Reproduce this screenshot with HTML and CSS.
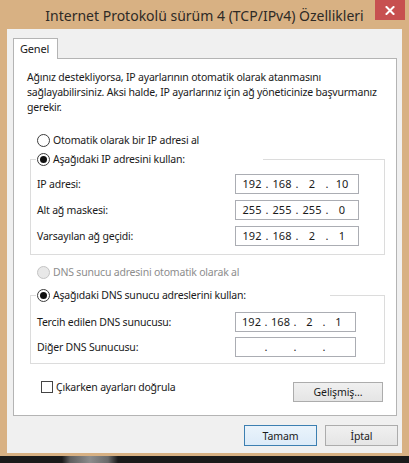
FILE: index.html
```html
<!DOCTYPE html>
<html lang="tr">
<head>
<meta charset="utf-8">
<title>Internet Protokolü sürüm 4 (TCP/IPv4) Özellikleri</title>
<link rel="stylesheet" href="styles.css">
</head>
<body>
<div class="window">
  <div class="titlebar">
    <div class="tb-left"></div>
    <div class="title">Internet Protokolü sürüm 4 (TCP/IPv4) Özellikleri</div>
    <div class="tb-right">
      <div class="close">
        <svg width="10" height="9" viewBox="0 0 10 9"><path d="M1.5 1 L8.5 8 M8.5 1 L1.5 8" stroke="#fff" stroke-width="2" stroke-linecap="square"/></svg>
      </div>
    </div>
  </div>
  <div class="client">
    <div class="tabs"><div class="tab">Genel</div></div>
    <div class="panel">
      <p class="intro">Ağınız destekliyorsa, IP ayarlarının otomatik olarak atanmasını<br>sağlayabilirsiniz. Aksi halde, IP ayarlarınız için ağ yöneticinize başvurmanız<br>gerekir.</p>

      <div class="radio first"><span class="rb"></span><span>Otomatik olarak bir IP adresi al</span></div>

      <fieldset class="group ipgroup">
        <legend><span class="radio"><span class="rb checked"></span><span>Aşağıdaki IP adresini kullan:</span></span></legend>
        <div class="row"><span class="lbl">IP adresi:</span>
          <div class="ip"><span class="seg">192</span><span class="dot">.</span><span class="seg">168</span><span class="dot">.</span><span class="seg">2</span><span class="dot">.</span><span class="seg">10</span></div>
        </div>
        <div class="row"><span class="lbl">Alt ağ maskesi:</span>
          <div class="ip"><span class="seg">255</span><span class="dot">.</span><span class="seg">255</span><span class="dot">.</span><span class="seg">255</span><span class="dot">.</span><span class="seg">0</span></div>
        </div>
        <div class="row"><span class="lbl">Varsayılan ağ geçidi:</span>
          <div class="ip"><span class="seg">192</span><span class="dot">.</span><span class="seg">168</span><span class="dot">.</span><span class="seg">2</span><span class="dot">.</span><span class="seg">1</span></div>
        </div>
      </fieldset>

      <div class="radio disabled dnsauto"><span class="rb"></span><span>DNS sunucu adresini otomatik olarak al</span></div>

      <fieldset class="group dnsgroup">
        <legend><span class="radio"><span class="rb checked"></span><span>Aşağıdaki DNS sunucu adreslerini kullan:</span></span></legend>
        <div class="row"><span class="lbl">Tercih edilen DNS sunucusu:</span>
          <div class="ip dns"><span class="seg">192</span><span class="dot">.</span><span class="seg">168</span><span class="dot">.</span><span class="seg">2</span><span class="dot">.</span><span class="seg">1</span></div>
        </div>
        <div class="row"><span class="lbl">Diğer DNS Sunucusu:</span>
          <div class="ip dns"><span class="seg"></span><span class="dot">.</span><span class="seg"></span><span class="dot">.</span><span class="seg"></span><span class="dot">.</span><span class="seg"></span></div>
        </div>
      </fieldset>

      <div class="optrow">
        <div class="check"><span class="cb"></span><span>Çıkarken ayarları doğrula</span></div>
        <button class="btn adv">Gelişmiş...</button>
      </div>
    </div>
    <div class="buttons">
      <button class="btn default">Tamam</button>
      <button class="btn">İptal</button>
    </div>
  </div>
</div>
<div class="desk"></div>
</body>
</html>
```

FILE: styles.css
```css
html, body {
  margin: 0;
  padding: 0;
}
body {
  width: 409px;
  height: 463px;
  overflow: hidden;
  background: #171411;
  font-family: "Noto Sans", "Open Sans", sans-serif;
  font-size: 10.5px;
  letter-spacing: -0.2px;
  color: #1a1a1a;
}
.window {
  box-sizing: border-box;
  height: 456px;
  padding: 0 7px 3px 7px;
  background: #d8b183;
}
.titlebar {
  margin: 0 -7px;
  height: 29px;
  display: grid;
  grid-template-columns: 1fr auto 1fr;
}
.title {
  font-size: 14px;
  letter-spacing: 0;
  line-height: 29px;
  color: #2e2a26;
  white-space: nowrap;
  padding-top: 1px;
}
.tb-right {
  display: flex;
  justify-content: flex-end;
  align-items: flex-start;
  padding-right: 4px;
}
.close {
  width: 30px;
  height: 20px;
  background: #c75050;
  display: flex;
  align-items: center;
  justify-content: center;
}
.client {
  box-sizing: border-box;
  height: 424px;
  background: #f0f0f0;
  padding: 9px 5px 0 6px;
}
.tabs {
  display: flex;
  height: 20px;
}
.tab {
  box-sizing: border-box;
  width: 45px;
  height: 21px;
  border: 1px solid #b4b4b4;
  border-bottom: none;
  background: #fff;
  padding-left: 6px;
  line-height: 19px;
  font-size: 11px;
  position: relative;
  z-index: 1;
}
.panel {
  box-sizing: border-box;
  height: 358px;
  background: #fff;
  border: 1px solid #b4b4b4;
  display: flex;
  flex-direction: column;
}
.intro {
  margin: 11px 0 0 13px;
  line-height: 15px;
  white-space: nowrap;
}
.radio {
  display: flex;
  align-items: center;
  line-height: 14px;
  height: 14px;
  white-space: nowrap;
}
.radio.first {
  margin: 18px 0 0 23px;
}
.rb {
  box-sizing: border-box;
  width: 13px;
  height: 13px;
  border-radius: 50%;
  border: 1px solid #3c3c3c;
  background: #fff;
  margin-right: 3px;
  display: flex;
  align-items: center;
  justify-content: center;
  flex: none;
}
.rb.checked::after {
  content: "";
  width: 7px;
  height: 7px;
  border-radius: 50%;
  background: #111;
}
.radio.disabled {
  color: #8d8d8d;
}
.radio.disabled .rb {
  border-color: #c4c4c4;
  background: #e8e8e8;
}
.radio.dnsauto {
  margin: 10px 0 0 23px;
}
.group {
  margin: 5px 11px 0 16px;
  padding: 8px 0 8px 0;
  border: 1px solid #dcdcdc;
  min-width: 0;
}
.group legend {
  box-sizing: border-box;
  margin-left: 5px;
  padding: 0 2px 0 1px;
}
.ipgroup legend {
  width: 227px;
}
.dnsgroup legend {
  width: 294px;
}
.dnsgroup {
  margin-top: 9px;
  padding-top: 10px;
  padding-bottom: 6px;
}
.row {
  display: flex;
  align-items: center;
  height: 20px;
  padding-left: 6px;
}
.row + .row {
  margin-top: 6px;
}
.dnsgroup .row + .row {
  margin-top: 5px;
}
.lbl {
  flex: 1;
  white-space: nowrap;
}
.ip {
  box-sizing: border-box;
  width: 124px;
  height: 20px;
  margin-right: 25px;
  border: 1px solid #abadb3;
  background: #fff;
  display: flex;
  align-items: center;
  padding: 0 4px;
  line-height: 18px;
  font-size: 11px;
  letter-spacing: 0;
}
.ip.dns {
  width: 121px;
  margin-right: 28px;
}
.seg {
  width: 24px;
  text-align: center;
}
.ip.dns .seg {
  width: 23px;
}
.dot {
  width: 6px;
  text-align: center;
}
.optrow {
  display: flex;
  justify-content: space-between;
  align-items: flex-start;
  margin: 18px 13px 0 27px;
}
.check {
  display: flex;
  align-items: center;
  height: 12px;
  margin-top: -1px;
  white-space: nowrap;
}
.cb {
  box-sizing: border-box;
  width: 12px;
  height: 12px;
  border: 1px solid #444;
  background: #fff;
  margin-right: 3px;
}
.btn {
  box-sizing: border-box;
  font-family: inherit;
  font-size: 10.5px;
  letter-spacing: -0.1px;
  color: #1a1a1a;
  border: 1px solid #acacac;
  background: linear-gradient(#f0f0f0, #e5e5e5);
  padding: 0;
  margin: 0;
}
.adv {
  width: 90px;
  height: 20px;
}
.buttons {
  display: flex;
  justify-content: flex-end;
  gap: 8px;
  padding-top: 9px;
  margin-right: -1px;
}
.buttons .btn {
  width: 73px;
  height: 21px;
}
.btn.default {
  border-color: #3c7fb1;
  background: linear-gradient(#eaf3fb, #dcebf8);
}
.desk {
  height: 7px;
  background: linear-gradient(to right, #1a1a1a 62px, #5e5e5e 70px, #8c8c8c 90px, #6a6a6a 108px, #1a1a1a 118px);
}
```
